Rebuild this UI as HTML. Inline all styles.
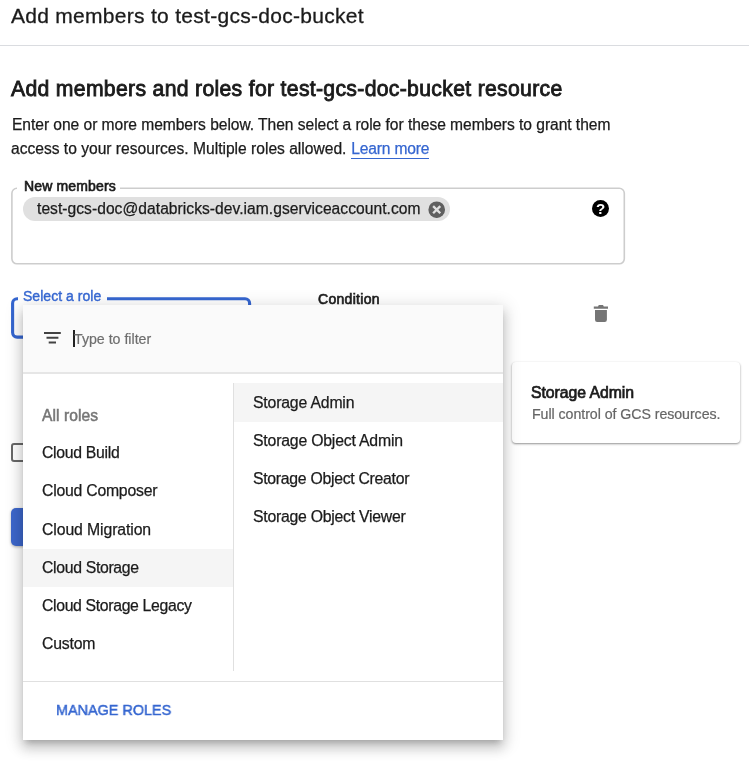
<!DOCTYPE html>
<html><head><meta charset="utf-8">
<style>
*{box-sizing:border-box;margin:0;padding:0}
html,body{width:749px;height:763px;overflow:hidden;background:#fff}
body{font-family:"Liberation Sans",Arial,sans-serif;color:#202124;position:relative}
.abs{position:absolute;white-space:nowrap}
.t,#p2{will-change:transform}
#hr{left:0;top:45px;width:749px;height:1px;background:#dadce0}
#p2{left:11px;top:138.6px;font-size:15.6px;line-height:20px;color:#1b1b1b;-webkit-text-stroke:0.25px}
a{color:#3566d0;text-decoration:none;border-bottom:1px solid #3566d0;padding-bottom:1.4px;letter-spacing:-0.16px;margin-left:0.4px}
#mgap{left:17px;top:186px;width:103px;height:5px;background:#fff}
#chip{left:23px;top:197px;height:24px;width:426.5px;border-radius:12px;background:#e0e0e0}
#rgap{left:18px;top:296px;width:88.7px;height:5px;background:#fff}
#cb{left:11px;top:443px;width:19px;height:19px;border:2px solid #696969;border-radius:3px}
#btn{left:11px;top:508px;width:80px;height:38px;background:#3d67cb;border-radius:5px;box-shadow:0 1px 3px rgba(0,0,0,.3)}
#pop{left:23px;top:305px;width:479.6px;height:434.5px;background:#fff;box-shadow:0 8px 11px 1px rgba(0,0,0,.14),0 3px 16px 3px rgba(0,0,0,.12),0 5px 6px -3px rgba(0,0,0,.2)}
#phead{left:0;top:0;width:479.6px;height:69px;background:#fafafa;border-bottom:2px solid #e6e6e6}
#caret{left:50.2px;top:25.2px;width:1.5px;height:17px;background:#222}
#vline{left:210px;top:78px;width:1px;height:288px;background:#e0e0e0}
#hline{left:0;top:376px;width:479.6px;height:1px;background:#e0e0e0}
.sel{background:#f5f5f5}
#card{left:512px;top:361.5px;width:228px;height:81px;background:#fff;border-radius:4px;box-shadow:0 1px 2px rgba(0,0,0,.32),0 1px 3px 0 rgba(0,0,0,.14)}
#title{left:11.2px;top:2.22px;font-size:21px;line-height:27px;color:#1b1b1b;-webkit-text-stroke:0.3px #1b1b1b;letter-spacing:0.284px;}
#h2{left:11.4px;top:74.85px;font-size:21.2px;line-height:28px;color:#1b1b1b;-webkit-text-stroke:0.85px #1b1b1b;letter-spacing:0.314px;}
#p1{left:11.6px;top:115.19px;font-size:15.6px;line-height:20px;color:#1b1b1b;-webkit-text-stroke:0.25px #1b1b1b;letter-spacing:-0.045px;}
#mlabel{left:23.5px;top:177.15px;font-size:14px;line-height:18px;color:#1b1b1b;-webkit-text-stroke:0.65px #1b1b1b;letter-spacing:0.150px;}
#chiptxt{left:36.8px;top:198.59px;font-size:15.6px;line-height:20px;color:#1b1b1b;-webkit-text-stroke:0.25px #1b1b1b;letter-spacing:0.044px;}
#rlabel{left:23.4px;top:286.95px;font-size:14px;line-height:18px;color:#3566d0;-webkit-text-stroke:0.4px #3566d0;letter-spacing:0.029px;}
#cond{left:318.0px;top:290.15px;font-size:14px;line-height:18px;color:#1b1b1b;-webkit-text-stroke:0.65px #1b1b1b;letter-spacing:0.294px;}
#ct{left:531.0px;top:382.23px;font-size:15.8px;line-height:21px;color:#1b1b1b;-webkit-text-stroke:0.7px #1b1b1b;letter-spacing:-0.048px;}
#cd{left:531.6px;top:405.18px;font-size:14.2px;line-height:18px;color:#666666;-webkit-text-stroke:0.2px #666666;letter-spacing:-0.054px;}
#ph{left:74.3px;top:330.08px;font-size:14.2px;line-height:18px;color:#6e6e6e;-webkit-text-stroke:0.2px #6e6e6e;letter-spacing:-0.006px;}
#l0{left:42.0px;top:405.59px;font-size:15.6px;line-height:20px;color:#757575;-webkit-text-stroke:0.5px #757575;letter-spacing:0.070px;}
#l1{left:42.3px;top:441.63px;font-size:15.8px;line-height:21px;color:#1b1b1b;-webkit-text-stroke:0.25px #1b1b1b;letter-spacing:-0.300px;}
#l2{left:42.3px;top:479.73px;font-size:15.8px;line-height:21px;color:#1b1b1b;-webkit-text-stroke:0.25px #1b1b1b;letter-spacing:-0.238px;}
#l3{left:42.3px;top:518.63px;font-size:15.8px;line-height:21px;color:#1b1b1b;-webkit-text-stroke:0.25px #1b1b1b;letter-spacing:-0.109px;}
#l4{left:42.3px;top:556.83px;font-size:15.8px;line-height:21px;color:#1b1b1b;-webkit-text-stroke:0.25px #1b1b1b;letter-spacing:-0.331px;}
#l5{left:42.3px;top:594.63px;font-size:15.8px;line-height:21px;color:#1b1b1b;-webkit-text-stroke:0.25px #1b1b1b;letter-spacing:-0.341px;}
#l6{left:42.3px;top:632.93px;font-size:15.8px;line-height:21px;color:#1b1b1b;-webkit-text-stroke:0.25px #1b1b1b;letter-spacing:-0.206px;}
#r0{left:253.2px;top:391.63px;font-size:15.8px;line-height:21px;color:#1b1b1b;-webkit-text-stroke:0.25px #1b1b1b;letter-spacing:-0.179px;}
#r1{left:253.2px;top:429.83px;font-size:15.8px;line-height:21px;color:#1b1b1b;-webkit-text-stroke:0.25px #1b1b1b;letter-spacing:-0.194px;}
#r2{left:253.2px;top:468.03px;font-size:15.8px;line-height:21px;color:#1b1b1b;-webkit-text-stroke:0.25px #1b1b1b;letter-spacing:-0.284px;}
#r3{left:253.2px;top:506.33px;font-size:15.8px;line-height:21px;color:#1b1b1b;-webkit-text-stroke:0.25px #1b1b1b;letter-spacing:-0.251px;}
#manage{left:56.4px;top:700.23px;font-size:15.5px;line-height:20px;color:#3566d0;-webkit-text-stroke:0.5px #3566d0;transform:scaleX(0.9288);transform-origin:0 0;}
</style></head><body>
<div class="abs" id="hr"></div>
<div class="abs" id="p2">access to your resources. Multiple roles allowed. <a>Learn more</a></div>

<svg class="abs" style="left:0;top:180px" width="640" height="90" viewBox="0 180 640 90"><rect x="11.9" y="188.3" width="612.4" height="75.5" rx="5" fill="none" stroke="#cdcdcd" stroke-width="1.6"/></svg>
<div class="abs" id="mgap"></div>
<div class="abs" id="chip"></div>
<svg class="abs" style="left:428px;top:200.5px" width="17.4" height="17.4" viewBox="0 0 18 18"><circle cx="9" cy="9" r="8.6" fill="#5f5f5f"/><path d="M5.3 5.3L12.7 12.7M12.7 5.3L5.3 12.7" stroke="#e0e0e0" stroke-width="2.4"/></svg>
<svg class="abs" style="left:592.2px;top:199.6px;will-change:transform" width="17" height="17" viewBox="0 0 18 18"><circle cx="9" cy="9" r="9" fill="#000"/><text x="9" y="14.6" font-family="Liberation Sans" font-weight="bold" font-size="16" text-anchor="middle" fill="#fff">?</text></svg>

<svg class="abs" style="left:0;top:280px" width="270" height="70" viewBox="0 280 270 70"><rect x="12.6" y="298.8" width="237" height="38.3" rx="4.5" fill="none" stroke="#3566d0" stroke-width="3.1"/></svg>
<div class="abs" id="rgap"></div>
<svg class="abs" style="left:590px;top:300px" width="24" height="26" viewBox="590 300 24 26"><path d="M593.8 306.6h4.2l0.8-1.5h4.2l0.8 1.5h4.2v2.2h-14.2z" fill="#757575"/><path d="M595 310h11.9v9.8a2.2 2.2 0 0 1-2.2 2.2h-7.5a2.2 2.2 0 0 1-2.2-2.2z" fill="#757575"/></svg>
<div class="abs" id="cb"></div>
<div class="abs" id="btn"></div>
<div class="abs" id="card"></div>

<div class="abs" id="pop">
  <div class="abs" id="phead"></div>
  <svg class="abs" style="left:21.3px;top:27px" width="18" height="13" viewBox="0 0 18 13"><path d="M0 1h16.8M2.5 5.75h11.9M4.7 10.5h7.3" stroke="#424242" stroke-width="2" fill="none"/></svg>
  <div class="abs" id="caret"></div>
  <div class="abs" id="vline"></div>
  <div class="abs sel" style="left:0;top:244px;width:210px;height:38px"></div>
  <div class="abs sel" style="left:211px;top:78px;width:268.6px;height:38.5px"></div>
  <div class="abs" id="hline"></div>
</div>
<div class="abs t" id="title">Add members to test-gcs-doc-bucket</div>
<div class="abs t" id="h2">Add members and roles for test-gcs-doc-bucket resource</div>
<div class="abs t" id="p1">Enter one or more members below. Then select a role for these members to grant them</div>
<div class="abs t" id="mlabel">New members</div>
<div class="abs t" id="chiptxt">test-gcs-doc@databricks-dev.iam.gserviceaccount.com</div>
<div class="abs t" id="rlabel">Select a role</div>
<div class="abs t" id="cond">Condition</div>
<div class="abs t" id="ct">Storage Admin</div>
<div class="abs t" id="cd">Full control of GCS resources.</div>
<div class="abs t" id="ph">Type to filter</div>
<div class="abs t" id="l0">All roles</div>
<div class="abs t" id="l1">Cloud Build</div>
<div class="abs t" id="l2">Cloud Composer</div>
<div class="abs t" id="l3">Cloud Migration</div>
<div class="abs t" id="l4">Cloud Storage</div>
<div class="abs t" id="l5">Cloud Storage Legacy</div>
<div class="abs t" id="l6">Custom</div>
<div class="abs t" id="r0">Storage Admin</div>
<div class="abs t" id="r1">Storage Object Admin</div>
<div class="abs t" id="r2">Storage Object Creator</div>
<div class="abs t" id="r3">Storage Object Viewer</div>
<div class="abs t" id="manage">MANAGE ROLES</div>
</body></html>
